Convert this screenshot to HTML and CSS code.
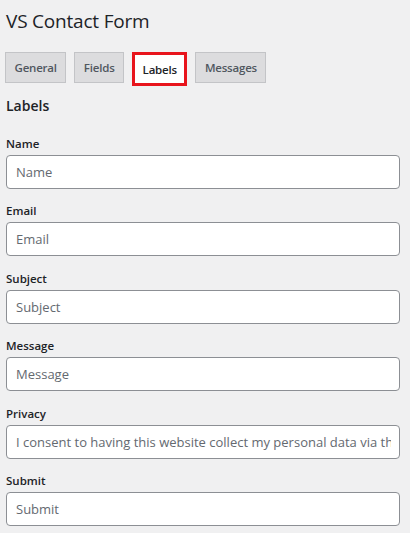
FILE: index.html
```html
<!DOCTYPE html>
<html>
<head>
<meta charset="utf-8">
<link rel="stylesheet" href="styles.css">
</head>
<body>
<div class="wrap">
  <h1 class="title">VS Contact Form</h1>
  <nav class="tabs">
    <span class="tab">General</span>
    <span class="tab">Fields</span>
    <span class="tab active">Labels</span>
    <span class="tab">Messages</span>
  </nav>
  <h2 class="section">Labels</h2>
  <div class="fields">
    <div class="field">
      <label class="label">Name</label>
      <input class="input" type="text" placeholder="Name">
    </div>
    <div class="field">
      <label class="label">Email</label>
      <input class="input" type="text" placeholder="Email">
    </div>
    <div class="field">
      <label class="label">Subject</label>
      <input class="input" type="text" placeholder="Subject">
    </div>
    <div class="field">
      <label class="label">Message</label>
      <input class="input" type="text" placeholder="Message">
    </div>
    <div class="field">
      <label class="label">Privacy</label>
      <input class="input" type="text" placeholder="I consent to having this website collect my personal data via this form.">
    </div>
    <div class="field">
      <label class="label">Submit</label>
      <input class="input" type="text" placeholder="Submit">
    </div>
  </div>
</div>
</body>
</html>
```
FILE: styles.css
```css
html, body {
  margin: 0;
  padding: 0;
  background: #f0f0f1;
}
body {
  font-family: "Open Sans", "Noto Sans", sans-serif;
  color: #1d2327;
}
.wrap {
  padding: 0 10px 0 6px;
}
.title {
  margin: 0;
  padding-top: 7px;
  font-size: 19px;
  letter-spacing: -0.2px;
  font-weight: 400;
  line-height: 28px;
  color: #1d2327;
}
.tabs {
  display: flex;
  align-items: flex-start;
  gap: 8px;
  margin-top: 17px;
  margin-left: -1px;
}
.tab {
  box-sizing: border-box;
  height: 31px;
  padding: 0 8.5px;
  display: flex;
  align-items: center;
  background: #dcdcde;
  border: 1px solid #c3c4c7;
  font-size: 11.5px;
  letter-spacing: -0.2px;
  font-weight: 600;
  color: #50575e;
}
.tab.active {
  height: 34px;
  background: #fff;
  border: 3px solid #e8141c;
  padding: 0 7.5px;
  color: #1d2327;
}
.section {
  margin: 10px 0 0;
  font-size: 14px;
  font-weight: 600;
  line-height: 20px;
  color: #1d2327;
}
.fields {
  display: flex;
  flex-direction: column;
  gap: 14.4px;
  margin-top: 20px;
}
.field {
  display: flex;
  flex-direction: column;
  gap: 4px;
}
.label {
  font-size: 11.5px;
  font-weight: 600;
  line-height: 15px;
  color: #1d2327;
}
.input {
  box-sizing: border-box;
  width: 100%;
  height: 34px;
  margin: 0;
  padding: 0 8px 0 9px;
  border: 1px solid #8c8f94;
  border-radius: 4px;
  background: #fff;
  font-family: "Open Sans", "Noto Sans", sans-serif;
  font-size: 13px;
  color: #2c3338;
}
.input::placeholder {
  color: #646970;
  opacity: 1;
}
```
